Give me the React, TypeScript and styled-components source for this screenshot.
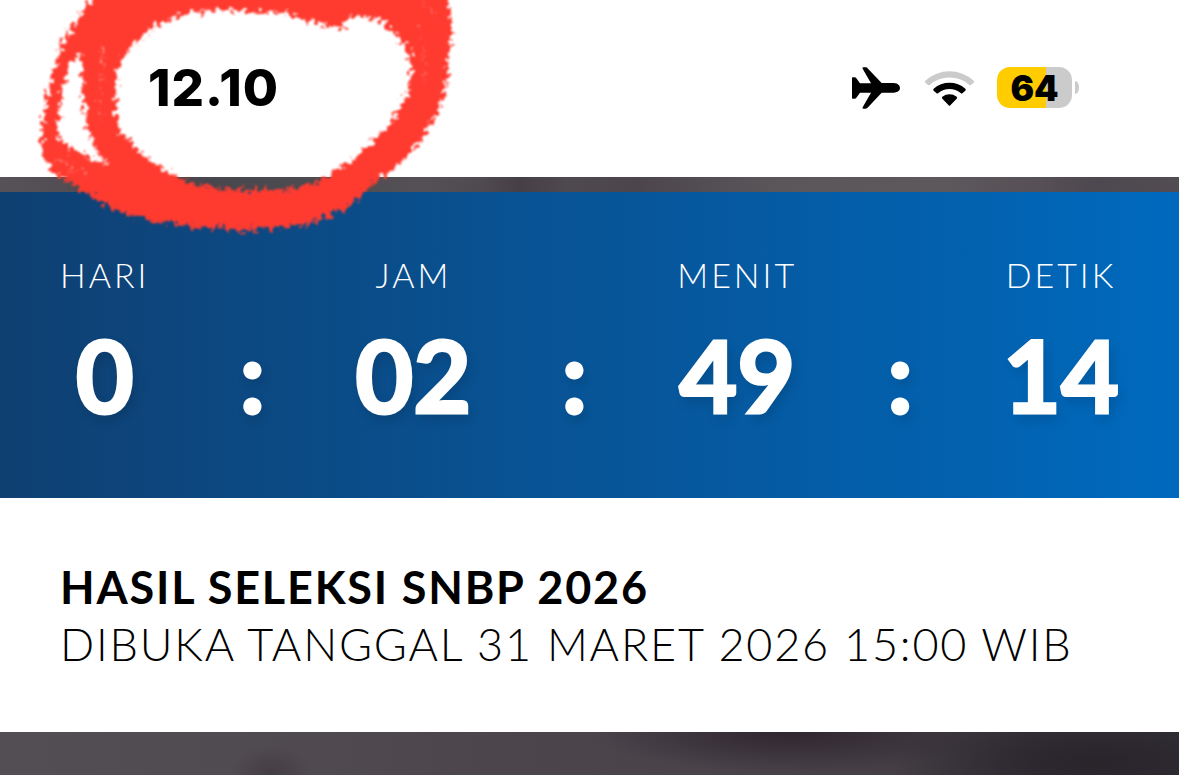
import React from 'react';
import styled, { createGlobalStyle } from 'styled-components';

const GlobalStyle = createGlobalStyle`
  * { box-sizing: border-box; }
  body { margin: 0; background: #4b454b; }
`;

const Page = styled.div`
  position: relative;
  min-height: 100vh;
  overflow: hidden;
  display: flex;
  flex-direction: column;
  font-family: Lato, sans-serif;
  background: #4b454b;
`;

const StatusBar = styled.header`
  display: flex;
  align-items: center;
  justify-content: space-between;
  height: 177px;
  padding: 0 100px 2px 148px;
  background: #fff;
  color: #000;
  font-family: Inter, sans-serif;
`;

const Clock = styled.time`
  font-size: 51px;
  line-height: 60px;
  font-weight: 800;
  letter-spacing: 1px;
  font-variation-settings: 'opsz' 14;
`;

const StatusIcons = styled.div`
  display: flex;
  align-items: center;
  gap: 22px;

  svg { display: block; }
`;

const Battery = styled.div`
  display: flex;
  align-items: center;
  gap: 3px;
`;

const BatteryBody = styled.div<{ $level: number }>`
  display: flex;
  align-items: center;
  justify-content: center;
  width: 75px;
  height: 41px;
  border-radius: 13px;
  background: linear-gradient(90deg, #ffcc00 ${(p) => p.$level}%, #cbcbcb ${(p) => p.$level}%);
  font-size: 35px;
  line-height: 40px;
  font-weight: 900;
`;

const BatteryCap = styled.div`
  width: 4px;
  height: 13px;
  border-radius: 0 4px 4px 0 / 0 6px 6px 0;
  background: #cbcbcb;
`;

const BackdropStrip = styled.div`
  height: 15px;
  background: linear-gradient(90deg, #575257 0%, #504b50 8%, #48474e 18%, #4c4b50 25%, #545056 36%,
    #4f4a4f 41%, #473f46 44%, #4e494e 48%, #4c464c 54%, #5a565a 66%, #5c585c 80%, #575056 88%, #4d474f 93%, #524d52 100%);
`;

const Countdown = styled.section`
  display: flex;
  justify-content: space-between;
  align-items: flex-end;
  padding: 61px 60px 64px;
  color: #fff;
  background: linear-gradient(90deg, #0f4072 0%, #0069bd 100%);
`;

const Unit = styled.div`
  display: flex;
  flex-direction: column;
  align-items: center;
  gap: 17px;
`;

const UnitLabel = styled.span`
  font-size: 34px;
  line-height: 44px;
  font-weight: 300;
  letter-spacing: 3px;
`;

const Figure = styled.span`
  font-size: 100px;
  line-height: 120px;
  font-weight: 700;
  -webkit-text-stroke: 3px #fff;
  text-shadow: 3px 6px 12px rgba(0, 0, 0, 0.15);
`;

const Announcement = styled.section`
  padding: 60px;
  background: #fff;
  color: #000;
`;

const Title = styled.h1`
  margin: 0;
  font-size: 45px;
  line-height: 58px;
  font-weight: 700;
  letter-spacing: 0.04em;
`;

const Schedule = styled.p`
  margin: 0;
  font-size: 45px;
  line-height: 56px;
  font-weight: 300;
  letter-spacing: 0.04em;
`;

const Backdrop = styled.footer`
  flex: 1;
  min-height: 43px;
  background:
    radial-gradient(ellipse 40px 30px at 23% 100%, rgba(60, 50, 58, 0.6), transparent),
    radial-gradient(ellipse 200px 40px at 67% 0%, #2f262f, transparent),
    radial-gradient(ellipse 200px 60px at 93% 70%, #29232a, transparent),
    linear-gradient(90deg, #534e54 0%, #504b51 22%, #4c454c 42%, #4a434a 58%, #453e45 75%, #37343b 88%, #333138 100%);
`;

const Scribble = styled.svg`
  position: absolute;
  top: 0;
  left: 0;
  pointer-events: none;
`;

const units = [
  { label: 'HARI', value: '0' },
  { label: 'JAM', value: '02' },
  { label: 'MENIT', value: '49' },
  { label: 'DETIK', value: '14' },
];

function AirplaneIcon() {
  return (
    <svg width="50" height="42" viewBox="0 0 150 126" role="img" aria-label="Mode pesawat">
      <path d="M2 31H8Q11 31 13 34L24 49H57L32 5Q30 1 34 1H41Q45 1 48 5L89 48H125C138 49 144 56 144 63S138 76 125 77H89L48 121Q45 125 41 125H34Q30 125 32 121L57 77H24L13 92Q11 95 8 95H2Q0 95 0 92V34Q0 31 2 31Z" />
    </svg>
  );
}

function WifiIcon() {
  return (
    <svg width="51" height="38" viewBox="0 0 153 114" role="img" aria-label="Wi-Fi">
      <path d="M4 35A108 108 0 0 1 149 35Q152 38 149 41L141 48Q138 50 135 47A90 90 0 0 0 18 47Q15 50 12 48L4 41Q1 38 4 35Z" fill="#cbcbcb" />
      <path d="M29 59A72 72 0 0 1 124 59Q127 62 124 65L116 72Q113 75 110 72A53 53 0 0 0 43 72Q40 75 37 72L29 65Q26 62 29 59Z" />
      <path d="M55 83A36 36 0 0 1 98 83Q101 86 98 89L79 109Q76 112 74 109L55 89Q52 86 55 83Z" />
    </svg>
  );
}

function MarkerCircle() {
  return (
    <Scribble width="480" height="250" viewBox="0 0 480 250" aria-hidden="true">
      <defs>
        <filter id="crayon" x="-5%" y="-5%" width="110%" height="110%" colorInterpolationFilters="sRGB">
          <feTurbulence type="fractalNoise" baseFrequency="0.19" numOctaves="3" seed="7" result="grain" />
          <feDisplacementMap in="SourceGraphic" in2="grain" scale="18" xChannelSelector="R" yChannelSelector="G" />
          <feGaussianBlur stdDeviation="0.8" />
        </filter>
      </defs>
      <g filter="url(#crayon)">
        <path
          fill="#ff3b30"
          fillRule="evenodd"
          d="M95 -20L93 0C80 12 66 34 58 57C50 76 45 105 42 127C40 150 46 170 62 177C68 181 76 188 88 193C98 202 110 209 124 213C140 220 158 222 174 223C196 229 218 227 240 230C258 230 274 229 290 226C302 226 312 222 322 218C334 214 346 208 354 201C362 194 368 188 375 182C388 174 400 164 409 156C420 144 425 134 428 126C436 118 440 110 441 104C447 92 447 80 448 67C450 50 451 34 451 17L447 -20Z
          M174 19C186 13 196 11 210 10C228 9 244 12 260 12C272 11 282 12 290 15C302 18 310 22 320 24C330 27 338 29 346 27C346 20 350 13 356 15C366 17 374 22 384 20C387 32 397 34 403 43C409 52 411 60 411 68C411 78 410 84 407 92C402 104 398 112 390 123C382 134 372 142 363 150C352 160 340 170 327 177C316 183 304 187 290 188C274 191 258 191 240 190C218 190 196 186 178 177C168 172 158 166 150 160C142 154 134 148 130 140C120 132 118 128 117 121C115 108 116 92 117 77C118 69 120 62 124 56C130 48 138 40 147 33C156 26 164 23 174 19Z
          M83 50C80 57 81 64 82 72C82 86 83 98 85 110C86 122 88 132 92 143C96 151 103 157 106 163C98 163 92 159 87 155C78 151 66 148 58 137C57 128 58 120 60 110C61 100 61 90 64 83C66 74 70 66 73 60C77 58 80 54 83 50Z"
        />
        <path d="M103 46C100 60 103 72 102 90" fill="none" stroke="#fff" strokeWidth="2" strokeDasharray="7 5 12 6" opacity="0.5" />
        <path d="M98 100C100 108 101 114 103 122" fill="none" stroke="#fff" strokeWidth="1" strokeDasharray="5 6" opacity="0.5" />
        <path d="M417 24C422 40 426 56 425 84M424 2C431 8 434 14 437 22" fill="none" stroke="#fff" strokeWidth="1" strokeDasharray="4 7 8 5" opacity="0.5" />
        <path d="M52 165C60 160 68 158 75 162M66 172C72 168 80 170 88 171" fill="none" stroke="#fff" strokeWidth="2" strokeDasharray="3 5" opacity="0.6" />
      </g>
    </Scribble>
  );
}

export default function App() {
  return (
    <Page>
      <GlobalStyle />
      <StatusBar>
        <Clock>12.10</Clock>
        <StatusIcons>
          <AirplaneIcon />
          <WifiIcon />
          <Battery>
            <BatteryBody $level={65}>64</BatteryBody>
            <BatteryCap />
          </Battery>
        </StatusIcons>
      </StatusBar>
      <BackdropStrip />
      <Countdown>
        {units.map((unit, index) => (
          <React.Fragment key={unit.label}>
            {index > 0 && <Figure>:</Figure>}
            <Unit>
              <UnitLabel>{unit.label}</UnitLabel>
              <Figure>{unit.value}</Figure>
            </Unit>
          </React.Fragment>
        ))}
      </Countdown>
      <Announcement>
        <Title>HASIL SELEKSI SNBP 2026</Title>
        <Schedule>DIBUKA TANGGAL 31 MARET 2026 15:00 WIB</Schedule>
      </Announcement>
      <Backdrop />
      <MarkerCircle />
    </Page>
  );
}
